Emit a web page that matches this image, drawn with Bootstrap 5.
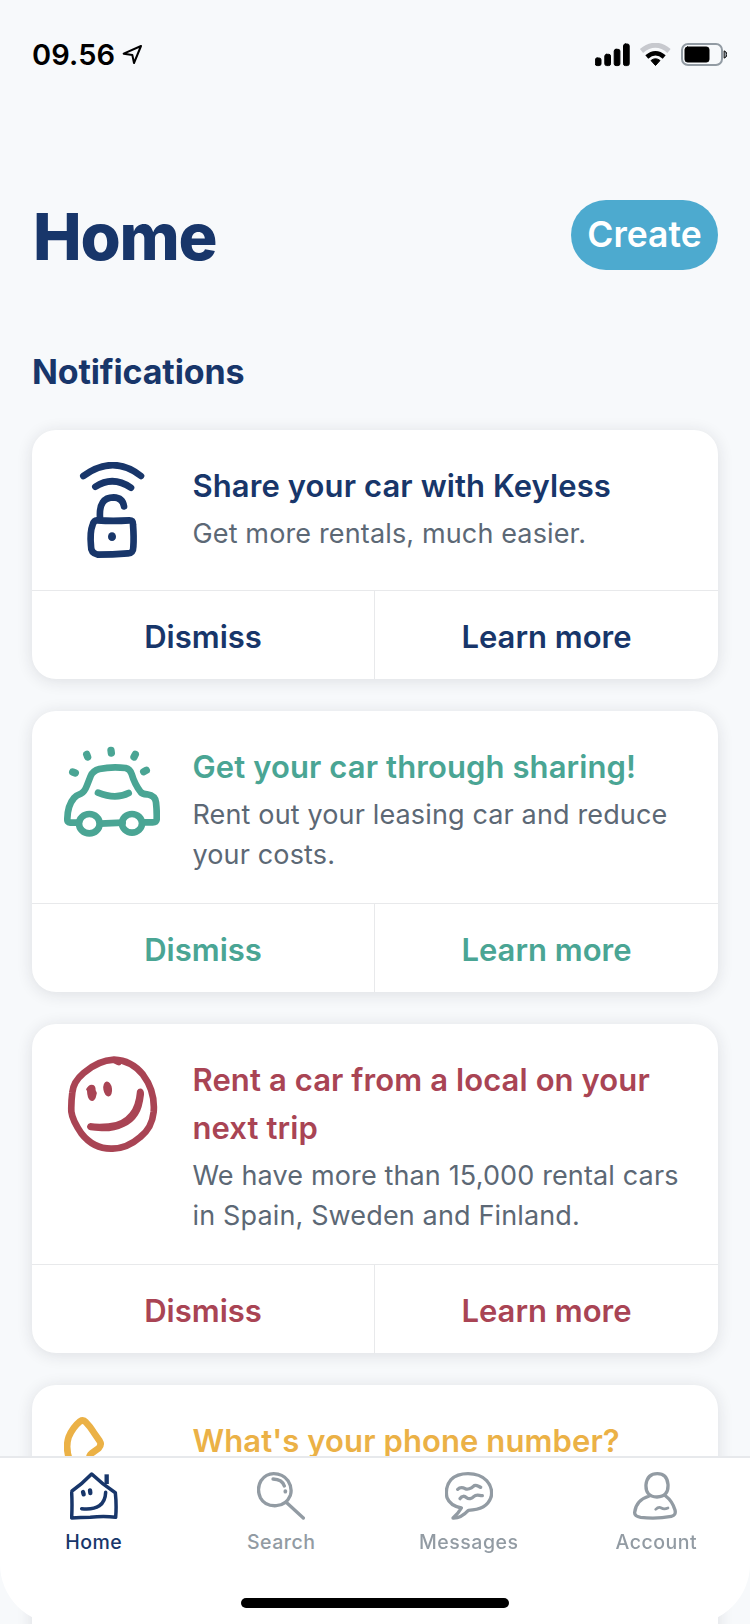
<!DOCTYPE html>
<html lang="en">
<head>
<meta charset="utf-8">
<meta name="viewport" content="width=device-width, initial-scale=1">
<title>Home</title>
<link href="https://cdn.jsdelivr.net/npm/bootstrap@5.3.0/dist/css/bootstrap.min.css" rel="stylesheet">
<style>
:root{--navy:#18366a;--green:#4aa594;--red:#a94454;--amber:#ebb146;--muted:#929ba3}
body{background:#f7f9fb;font-family:Inter,"Liberation Sans",sans-serif;overflow:hidden}
.screen{height:1624px;overflow:hidden}
svg{display:block;fill:none;stroke:currentColor;stroke-linecap:round;stroke-linejoin:round;flex:none}
.status{height:200px;padding:37px 23px 0 32px;color:#000}
.clock{width:89px;font-size:29px;line-height:36px;font-weight:600;letter-spacing:.1px}
.content{padding:0 32px}
.page-title{font-size:65px;line-height:66px;font-weight:800;color:var(--navy);letter-spacing:-1.2px;padding:4px 0 0 1px}
.btn-create{width:147px;height:70px;background:#4daacf;color:#fff;font-size:35.500px;font-weight:600;line-height:70px}
.section-title{font-size:34px;line-height:40px;font-weight:700;color:var(--navy);letter-spacing:-.15px;margin-top:82px;margin-bottom:38px}
.notice{border:0;border-radius:24px;box-shadow:0 2px 16px rgba(30,35,50,.12);color:var(--tone)}
.notice h3{font-size:31px;line-height:48px;font-weight:600;letter-spacing:.1px}
.notice p{font-size:27px;line-height:40px;color:#5c6875;letter-spacing:.14px;padding-top:4px;margin-bottom:-4px}
.notice .card-body{padding:32px;gap:32.500px}
.actions{border-top:1px solid #e8e9eb}
.actions .btn{height:88px;border:0;border-radius:0;color:inherit;font-size:31px;font-weight:600;line-height:48px;padding:22px 0 18px}
.actions .btn:first-child{border-right:1px solid #e8e9eb}
.tabs{height:168px;border-top:2px solid #e7e9ec;border-radius:0 0 60px 60px;background:#fff}
.tabs .nav-link{padding:14px 0 0;color:var(--muted);font-size:19.500px;line-height:24px;font-weight:500;letter-spacing:.5px}
.tabs .nav-link.active{color:var(--navy)}
.tabs svg{margin:0 auto 10px}
.grabber{width:268px;height:10px;border-radius:5px;background:#000;left:241px;bottom:16px}
</style>
</head>
<body>
<div class="screen">
  <header class="status d-flex align-items-start justify-content-between">
    <div class="d-flex align-items-center">
      <span class="clock">09.56</span>
      <svg width="22" height="22" viewBox="302 42 66 66" stroke="#000" stroke-width="6"><path d="M362 48L310 71L336 75L341 99Z"/></svg>
    </div>
    <svg width="132" height="24" viewBox="595 43 132 24" style="margin-top:6px" stroke="none">
      <g fill="#000"><rect x="595.300" y="58" width="5.700" height="7.600" rx="1.800"/><rect x="604.800" y="54.300" width="5.700" height="11.300" rx="1.800"/><rect x="614.200" y="49.300" width="5.700" height="16.300" rx="1.800"/><rect x="623.500" y="44" width="5.700" height="21.600" rx="1.800"/></g>
      <g stroke-linecap="butt"><path d="M641.500 51Q655.500 39.500 669 51" stroke="#c7c9ce" stroke-width="5"/><path d="M646.800 57Q655.500 49.500 664.200 57" stroke="#000" stroke-width="4.500"/><path d="M651 60.500Q655.500 57 660 60.500L655.500 65.500Z" fill="#000"/></g>
      <rect x="682" y="44" width="40" height="21" rx="6" stroke="#929ba3" stroke-width="2"/><rect x="685" y="47" width="24" height="15" rx="2.500" fill="#000"/><path d="M724.500 51Q727 52 727 54.500T724.500 58Z" fill="#929ba3"/>
    </svg>
  </header>
  <main class="content">
    <div class="d-flex justify-content-between align-items-center">
      <h1 class="page-title mb-0">Home</h1>
      <button class="btn btn-create rounded-pill p-0 border-0">Create</button>
    </div>
    <h2 class="section-title">Notifications</h2>
    <div class="d-grid" style="gap:32px">
      <article class="card notice" style="--tone:var(--navy)">
        <div class="card-body d-flex align-items-start">
          <svg width="96" height="96" viewBox="102 96 288 288" stroke-width="20"><path d="M160 138Q250 73 333 138M196 170Q248 136 303 173M210 262Q206 202 251 202Q278 203 282 229"/><path d="M202 271Q250 274 298 271Q309 271 309 283Q312 323 310 350Q310 371 293 370Q247 374 204 374Q182 370 183 348Q179 306 188 284Q192 270 202 271Z"/><ellipse cx="246" cy="320" rx="12" ry="13" fill="currentColor" stroke="none"/></svg>
          <div><h3 class="m-0">Share your car with Keyless</h3><p>Get more rentals, much easier.</p></div>
        </div>
        <div class="actions d-flex"><button class="btn w-50">Dismiss</button><button class="btn w-50">Learn more</button></div>
      </article>
      <article class="card notice" style="--tone:var(--green)">
        <div class="card-body d-flex align-items-start">
          <svg width="96" height="96" viewBox="102 99 288 288" stroke-width="20"><path d="M146 338H120Q111 338 112 326Q113 286 132 264Q139 256 153 251Q164 245 171 226L182 198Q189 182 208 177Q245 169 287 174Q300 177 305 192Q314 223 332 246Q337 252 351 253Q376 257 378 277Q381 304 380 329Q379 337 368 337H339M210 341L278 338"/><ellipse cx="178" cy="341" rx="31" ry="29"/><ellipse cx="306" cy="340" rx="30" ry="28"/><path d="M204 248Q257 270 296 249"/><g stroke-width="22"><path d="M128 186L136 189M170 133L173 141M243 121L244 129M316 133L312 141M349 181L341 185"/></g></svg>
          <div><h3 class="m-0">Get your car through sharing!</h3><p>Rent out your leasing car and reduce<br>your costs.</p></div>
        </div>
        <div class="actions d-flex"><button class="btn w-50">Dismiss</button><button class="btn w-50">Learn more</button></div>
      </article>
      <article class="card notice" style="--tone:var(--red)">
        <div class="card-body d-flex align-items-start">
          <svg width="96" height="96" viewBox="102 108 288 288" stroke-width="20"><path d="M252 119Q205 121 161 159Q130 185 127 217Q123 247 124 275Q127 301 154 340Q190 386 243 386Q290 387 331 351Q366 324 371 276Q376 213 339 164Q304 121 252 119L266 126"/><g fill="currentColor" stroke="none"><path d="M168 208Q177 190 190 195Q197 198 197 211Q202 217 199 226Q196 242 187 243Q178 243 174 232Q171 220 171 213Z"/><ellipse cx="233" cy="207" rx="13" ry="23" transform="rotate(-8 233 207)"/><path d="M181 309Q202 313 235 310Q276 307 299 278Q317 257 321 212Q326 203 335 206Q343 210 342 224Q337 266 324 285Q308 310 283 320Q254 335 215 334Q193 333 181 331Q171 328 171 319Q173 310 181 309Z"/></g></svg>
          <div><h3 class="m-0">Rent a car from a local on your<br>next trip</h3><p>We have more than 15,000 rental cars<br>in Spain, Sweden and Finland.</p></div>
        </div>
        <div class="actions d-flex"><button class="btn w-50">Dismiss</button><button class="btn w-50">Learn more</button></div>
      </article>
      <article class="card notice" style="--tone:var(--amber);height:281px">
        <div class="card-body d-flex align-items-start">
          <svg width="96" height="96" viewBox="192 111 288 288" stroke-width="20"><path d="M210 245Q195 203 206 171Q218 142 240 124Q250 118 258 127Q270 139 281 157L299 183Q306 194 296 205L275 220Q264 229 270 245"/></svg>
          <div><h3 class="m-0">What's your phone number?</h3></div>
        </div>
      </article>
    </div>
  </main>
</div>
<nav class="tabs fixed-bottom">
  <div class="nav nav-justified text-center">
    <a class="nav-link nav-item active" href="#"><svg width="48" height="48" viewBox="209 276 144 144" stroke-width="10.500"><path d="M215 333Q245 312 274 282Q305 312 345 338Q349 376 346 412Q310 407 270 412Q240 412 214 414Q216 372 214 338"/><path d="M319 283V312" stroke-width="13" stroke-linecap="butt"/><path d="M248 336L250 343M269 331L270 339" stroke-width="13"/><path d="M244 386Q314 393 316 337"/></svg>Home</a>
    <a class="nav-link nav-item" href="#"><svg width="48" height="48" viewBox="772 276 144 144" stroke-width="10"><path d="M822 281Q849 281 865 302Q879 324 872 346Q860 375 830 377Q796 379 782 353Q770 326 784 302Q799 281 822 281ZM862 369L911 414M820 297Q848 298 854 318"/><path d="M857 333V335" stroke-width="11"/></svg>Search</a>
    <a class="nav-link nav-item" href="#"><svg width="48" height="48" viewBox="209 276 144 144" stroke-width="10"><path d="M278 281Q314 281 334 302Q354 324 347 352Q334 390 279 391Q257 415 233 414Q250 399 258 384Q224 377 215 353Q208 321 227 299Q245 281 278 281Z"/><path d="M247 328C256 319 264 323 270 326S287 326 294 319S306 318 316 322M254 356C260 346 268 348 274 353S289 356 296 349S309 346 321 347" stroke-width="10"/></svg>Messages</a>
    <a class="nav-link nav-item" href="#"><svg width="48" height="48" viewBox="772 276 144 144" stroke-width="10"><path d="M848 281Q877 281 880 313Q882 350 847 351Q812 350 814 314Q818 281 848 281ZM824 348Q784 360 780 397Q779 409 798 412Q844 418 890 409Q905 406 901 390Q893 363 873 348"/><path d="M843 388Q852 379 860 384T880 384" stroke-width="8"/></svg>Account</a>
  </div>
  <div class="grabber position-absolute"></div>
</nav>
<script src="https://cdn.jsdelivr.net/npm/bootstrap@5.3.0/dist/js/bootstrap.bundle.min.js"></script>
</body>
</html>
